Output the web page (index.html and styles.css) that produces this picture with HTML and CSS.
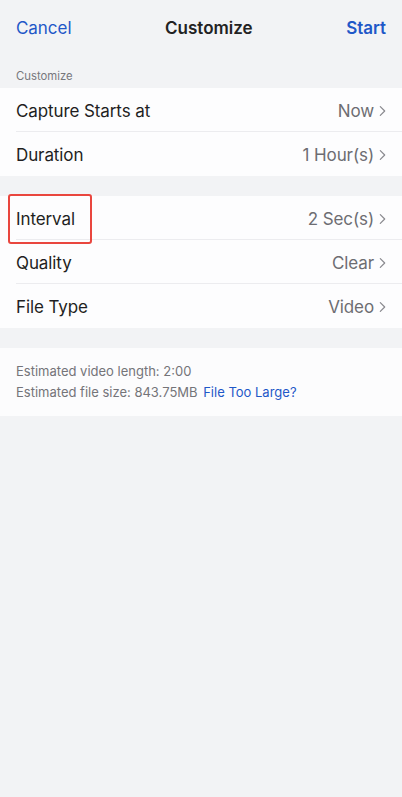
FILE: index.html
```html
<!DOCTYPE html>
<html lang="en">
<head>
<meta charset="utf-8">
<title>Customize</title>
<link rel="stylesheet" href="styles.css">
</head>
<body>
<div class="screen">
  <header class="navbar">
    <span class="nav-btn">Cancel</span>
    <span class="nav-title">Customize</span>
    <span class="nav-btn strong">Start</span>
  </header>
  <div class="section-label">Customize</div>
  <div class="group">
    <div class="row"><span class="label">Capture Starts at</span><span class="value">Now<svg class="chev" viewBox="0 0 8 13"><path d="M1.5 1.5 L6.5 6.5 L1.5 11.5"/></svg></span></div>
    <div class="row"><span class="label">Duration</span><span class="value">1 Hour(s)<svg class="chev" viewBox="0 0 8 13"><path d="M1.5 1.5 L6.5 6.5 L1.5 11.5"/></svg></span></div>
  </div>
  <div class="group spaced">
    <div class="row"><span class="label highlighted">Interval</span><span class="value">2 Sec(s)<svg class="chev" viewBox="0 0 8 13"><path d="M1.5 1.5 L6.5 6.5 L1.5 11.5"/></svg></span></div>
    <div class="row"><span class="label">Quality</span><span class="value">Clear<svg class="chev" viewBox="0 0 8 13"><path d="M1.5 1.5 L6.5 6.5 L1.5 11.5"/></svg></span></div>
    <div class="row"><span class="label">File Type</span><span class="value">Video<svg class="chev" viewBox="0 0 8 13"><path d="M1.5 1.5 L6.5 6.5 L1.5 11.5"/></svg></span></div>
  </div>
  <div class="info">
    <p>Estimated video length: 2:00</p>
    <p>Estimated file size: 843.75MB <a class="link">File Too Large?</a></p>
  </div>
</div>
</body>
</html>
```

FILE: styles.css
```css
html, body {
  margin: 0;
  padding: 0;
  background: #f2f3f5;
}
body {
  font-family: Inter, "Noto Sans", "Liberation Sans", sans-serif;
  color: #1d1d1f;
  width: 402px;
  height: 797px;
  overflow: hidden;
}
.screen {
  display: flex;
  flex-direction: column;
}
.navbar {
  height: 54px;
  display: flex;
  align-items: center;
  justify-content: space-between;
  padding: 2px 16px 0 16px;
  box-sizing: border-box;
}
.nav-btn {
  font-size: 17px;
  color: #1f58c8;
  letter-spacing: -0.05px;
}
.nav-btn.strong {
  font-weight: 600;
}
.nav-title {
  font-size: 17px;
  font-weight: 600;
  color: #222;
  letter-spacing: 0;
}
.section-label {
  font-size: 11.3px;
  color: #77777c;
  padding: 16px 16px 5px;
  line-height: 13px;
}
.group {
  background: #fdfdfe;
  padding-left: 16px;
}
.group.spaced {
  margin-top: 20px;
}
.row {
  height: 44px;
  display: flex;
  align-items: center;
  justify-content: space-between;
  padding: 2px 16px 0 0;
  box-sizing: border-box;
  border-bottom: 1px solid #ececef;
  position: relative;
}
.row:last-child {
  border-bottom: none;
}
.label {
  font-size: 17px;
  color: #1f1f22;
  letter-spacing: -0.1px;
}
.highlighted {
  position: relative;
}
.highlighted::after {
  content: "";
  position: absolute;
  left: -8px;
  top: -15px;
  width: 80px;
  height: 46px;
  border: 2.5px solid #e9463e;
  border-radius: 3px;
}
.value {
  display: flex;
  align-items: center;
  font-size: 17px;
  color: #6d6d72;
  letter-spacing: -0.1px;
}
.chev {
  width: 7px;
  height: 12px;
  margin-left: 5px;
  fill: none;
  stroke: #8a8a8f;
  stroke-width: 1.4;
  stroke-linecap: round;
  stroke-linejoin: round;
}
.info {
  margin-top: 20px;
  background: #fcfcfd;
  padding: 13px 16px 13px;
  font-size: 13px;
  color: #747479;
  height: 68px;
  box-sizing: border-box;
}
.info p {
  margin: 0;
  line-height: 21px;
}
.link {
  color: #1f58c8;
  margin-left: 2px;
}
```
